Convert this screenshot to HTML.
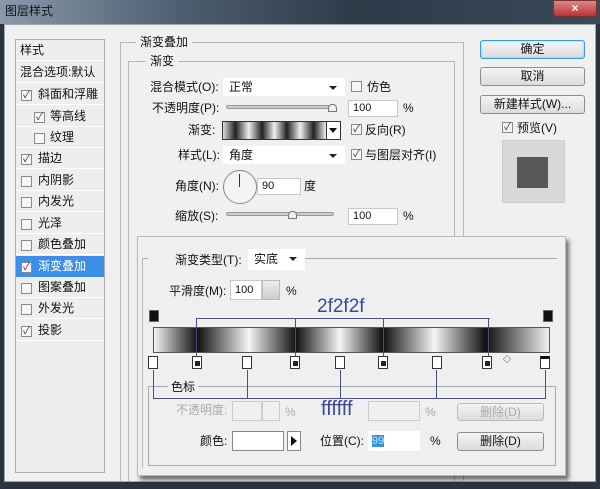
<!DOCTYPE html>
<html><head><meta charset="utf-8"><style>
*{margin:0;padding:0;box-sizing:border-box}
body{width:600px;height:489px;overflow:hidden;background:#2a3440;font-family:"Liberation Sans","Noto Sans CJK SC",sans-serif;font-size:12px;color:#111;position:relative}
.a{position:absolute;white-space:nowrap}
.t{position:absolute;white-space:nowrap;line-height:14px}
.box{position:absolute;border:1px solid #b8b8b8}
.inp{position:absolute;background:#fff;border:1px solid #c8c8c8;line-height:15px;padding-left:4px;font-size:11px}
.cb{position:absolute;width:11px;height:11px;border:1px solid #8a8a8a;background:#f6f6f6;font-size:10px;line-height:9px;text-align:center;color:#334}
.btn{position:absolute;border:1px solid #8d8d8d;border-radius:3px;background:linear-gradient(#f4f4f4,#dcdcdc);text-align:center;line-height:16px}
.sel{position:absolute;background:#fff;padding-left:6px;line-height:18px}
.sel:after{content:"";position:absolute;right:8px;top:8px;border:4px solid transparent;border-top:4px solid #222}
.item{position:absolute;left:16px;width:88px;height:21px;border-bottom:1px solid #fff;line-height:20px;padding-left:4px}
.vl{position:absolute;width:1px;background:#4a4f8a}
.hl{position:absolute;height:1px;background:#4a4f8a}
.sw{position:absolute;width:10px;height:13px;border:1px solid #333;background:#fff}
.sw.k:after{content:"";position:absolute;left:2px;top:4px;width:5px;height:5px;background:#222}
</style></head><body>
<div class="a" style="left:0;top:0;width:600px;height:24px;background:linear-gradient(90deg,#8a9aab 0%,#4d5e70 30%,#2d3a48 60%,#3a4a5a 100%)"></div>
<div class="t" style="left:5px;top:4px;color:#111">图层样式</div>
<div class="a" style="left:553px;top:0;width:44px;height:17px;background:linear-gradient(#d88,#b33);border-radius:0 0 4px 4px;border:1px solid #733;color:#fff;text-align:center;line-height:15px;font-weight:bold">×</div>
<div class="a" style="left:4px;top:24px;width:592px;height:458px;background:#f0f0f0;border:1px solid #9aa"></div>

<!-- left list -->
<div class="a" style="left:15px;top:39px;width:90px;height:434px;border:1px solid #aaa;background:#eeeeee"></div>
<div class="item" style="top:40px">样式</div>
<div class="item" style="top:62px">混合选项:默认</div>
<div class="item" style="top:84px;padding-left:22px">斜面和浮雕</div><div class="cb" style="left:21px;top:90px">✓</div>
<div class="item" style="top:106px;padding-left:34px">等高线</div><div class="cb" style="left:34px;top:112px">✓</div>
<div class="item" style="top:127px;padding-left:34px">纹理</div><div class="cb" style="left:34px;top:133px"></div>
<div class="item" style="top:148px;padding-left:22px">描边</div><div class="cb" style="left:21px;top:154px">✓</div>
<div class="item" style="top:170px;padding-left:22px">内阴影</div><div class="cb" style="left:21px;top:176px"></div>
<div class="item" style="top:191px;padding-left:22px">内发光</div><div class="cb" style="left:21px;top:197px"></div>
<div class="item" style="top:213px;padding-left:22px">光泽</div><div class="cb" style="left:21px;top:219px"></div>
<div class="item" style="top:234px;padding-left:22px">颜色叠加</div><div class="cb" style="left:21px;top:240px"></div>
<div class="item" style="top:256px;padding-left:22px;background:#3d8ee6;color:#fff;border-color:#3d8ee6">渐变叠加</div><div class="cb" style="left:21px;top:262px;color:#c00">✓</div>
<div class="item" style="top:277px;padding-left:22px">图案叠加</div><div class="cb" style="left:21px;top:283px"></div>
<div class="item" style="top:298px;padding-left:22px">外发光</div><div class="cb" style="left:21px;top:304px"></div>
<div class="item" style="top:320px;padding-left:22px">投影</div><div class="cb" style="left:21px;top:326px">✓</div>

<!-- main group -->
<div class="box" style="left:120px;top:42px;width:344px;height:440px;border-bottom:none"></div>
<div class="t" style="left:136px;top:35px;background:#f0f0f0;padding:0 4px">渐变叠加</div>
<div class="box" style="left:128px;top:61px;width:327px;height:420px;border-bottom:none"></div>
<div class="t" style="left:146px;top:54px;background:#f0f0f0;padding:0 4px">渐变</div>

<div class="t" style="left:150px;top:80px">混合模式(O):</div>
<div class="sel" style="left:223px;top:78px;width:122px">正常</div>
<div class="cb" style="left:351px;top:81px"></div><div class="t" style="left:367px;top:80px">仿色</div>
<div class="t" style="left:152px;top:101px">不透明度(P):</div>
<div class="a" style="left:226px;top:105px;width:106px;height:4px;border:1px solid #999;background:#ccc;border-radius:2px"></div>
<div class="a" style="left:328px;top:104px;width:9px;height:8px;border:1px solid #777;background:#eee;border-radius:4px 4px 0 0"></div>
<div class="inp" style="left:348px;top:100px;width:50px;height:17px">100</div><div class="t" style="left:403px;top:101px">%</div>
<div class="t" style="left:188px;top:123px">渐变:</div>
<div class="a" style="left:222px;top:121px;width:105px;height:19px;border:1px solid #333;background:linear-gradient(90deg,#ddd,#222 12%,#eee 25%,#222 38%,#eee 50%,#222 62%,#eee 75%,#222 88%,#eee)"></div>
<div class="a" style="left:326px;top:121px;width:15px;height:19px;border:1px solid #333;background:#fff"></div>
<div class="a" style="left:329px;top:128px;border:4px solid transparent;border-top:5px solid #111"></div>
<div class="cb" style="left:351px;top:124px">✓</div><div class="t" style="left:365px;top:123px">反向(R)</div>
<div class="t" style="left:178px;top:148px">样式(L):</div>
<div class="sel" style="left:223px;top:146px;width:122px">角度</div>
<div class="cb" style="left:351px;top:149px">✓</div><div class="t" style="left:365px;top:148px">与图层对齐(I)</div>
<div class="t" style="left:175px;top:179px">角度(N):</div>
<div class="a" style="left:223px;top:170px;width:34px;height:34px;border:1px solid #888;border-radius:50%;background:#f4f4f4"></div>
<div class="a" style="left:239px;top:174px;width:1px;height:13px;background:#333"></div>
<div class="inp" style="left:257px;top:178px;width:44px;height:17px">90</div><div class="t" style="left:304px;top:179px">度</div>
<div class="t" style="left:175px;top:209px">缩放(S):</div>
<div class="a" style="left:226px;top:212px;width:108px;height:4px;border:1px solid #999;background:#ccc;border-radius:2px"></div>
<div class="a" style="left:288px;top:211px;width:9px;height:8px;border:1px solid #777;background:#eee;border-radius:4px 4px 0 0"></div>
<div class="inp" style="left:348px;top:208px;width:50px;height:17px">100</div><div class="t" style="left:403px;top:209px">%</div>

<!-- right buttons -->
<div class="btn" style="left:480px;top:40px;width:105px;height:19px;border-color:#3aa0c8;box-shadow:0 0 2px #6cf inset">确定</div>
<div class="btn" style="left:480px;top:67px;width:105px;height:19px">取消</div>
<div class="btn" style="left:480px;top:95px;width:105px;height:19px">新建样式(W)...</div>
<div class="cb" style="left:502px;top:122px">✓</div><div class="t" style="left:517px;top:121px">预览(V)</div>
<div class="a" style="left:502px;top:140px;width:63px;height:63px;background:#d8d8d8;border:1px solid #ccc"></div>
<div class="a" style="left:517px;top:157px;width:31px;height:31px;background:#585858"></div>

<!-- popup -->
<div class="a" style="left:137px;top:236px;width:429px;height:240px;background:#efefef;border:1px solid #bbb;box-shadow:3px 4px 4px rgba(0,0,0,.55)"></div>
<div class="hl" style="left:142px;top:258px;width:6px;background:#aaa"></div>
<div class="hl" style="left:305px;top:258px;width:252px;background:#aaa"></div>
<div class="vl" style="left:142px;top:258px;height:210px;background:#bbb"></div>
<div class="t" style="left:175px;top:253px">渐变类型(T):</div>
<div class="sel" style="left:248px;top:249px;width:57px;height:21px;line-height:21px">实底</div>
<div class="t" style="left:169px;top:284px">平滑度(M):</div>
<div class="inp" style="left:230px;top:280px;width:32px;height:20px;line-height:18px">100</div>
<div class="a" style="left:262px;top:280px;width:18px;height:20px;background:linear-gradient(#eee,#ccc);border:1px solid #bbb"></div>
<div class="t" style="left:286px;top:284px">%</div>
<div class="a" style="left:317px;top:297px;font-size:19px;color:#3c4a94;line-height:20px">2f2f2f</div>

<div class="a" style="left:149px;top:310px;width:10px;height:12px;background:#111;border:1px solid #666"></div>
<div class="a" style="left:543px;top:310px;width:10px;height:12px;background:#111;border:1px solid #666"></div>
<div class="a" style="left:153px;top:327px;width:397px;height:26px;border:1px solid #555;background:linear-gradient(90deg,#f4f4f4 0%,#111 11%,#f4f4f4 24%,#111 36%,#f4f4f4 47%,#111 58%,#f4f4f4 71%,#111 84%,#f0f0f0 100%)"></div>
<div class="hl" style="left:196px;top:318px;width:294px"></div>
<div class="vl" style="left:196px;top:318px;height:38px"></div>
<div class="vl" style="left:295px;top:318px;height:38px"></div>
<div class="vl" style="left:383px;top:318px;height:38px"></div>
<div class="vl" style="left:488px;top:318px;height:38px"></div>

<div class="sw" style="left:148px;top:356px"></div>
<div class="sw k" style="left:192px;top:356px"></div>
<div class="sw" style="left:242px;top:356px"></div>
<div class="sw k" style="left:290px;top:356px"></div>
<div class="sw" style="left:335px;top:356px"></div>
<div class="sw k" style="left:378px;top:356px"></div>
<div class="sw" style="left:432px;top:356px"></div>
<div class="sw k" style="left:482px;top:356px"></div>
<div class="a" style="left:503px;top:354px;font-size:8px">◇</div>
<div class="sw" style="left:540px;top:356px;border-top:3px solid #111"></div>

<div class="box" style="left:148px;top:386px;width:408px;height:80px;border-color:#aaa"></div>
<div class="t" style="left:168px;top:380px;background:#efefef;padding:0 3px">色标</div>
<div class="hl" style="left:153px;top:398px;width:393px"></div>
<div class="vl" style="left:153px;top:370px;height:29px"></div>
<div class="vl" style="left:247px;top:370px;height:29px"></div>
<div class="vl" style="left:340px;top:370px;height:29px"></div>
<div class="vl" style="left:436px;top:370px;height:29px"></div>
<div class="vl" style="left:545px;top:370px;height:29px"></div>

<div class="t" style="left:176px;top:403px;color:#aaa">不透明度:</div>
<div class="a" style="left:232px;top:401px;width:30px;height:20px;border:1px solid #ccc;background:#f0f0f0"></div>
<div class="a" style="left:262px;top:401px;width:18px;height:20px;border:1px solid #ccc;background:#f0f0f0"></div>
<div class="t" style="left:285px;top:405px;color:#aaa">%</div>
<div class="a" style="left:321px;top:398px;font-size:20px;color:#3c4a94;line-height:22px">ffffff</div>
<div class="a" style="left:368px;top:401px;width:52px;height:20px;border:1px solid #ccc;background:#f0f0f0"></div>
<div class="t" style="left:425px;top:405px;color:#aaa">%</div>
<div class="btn" style="left:457px;top:403px;width:87px;height:18px;color:#aaa;border-color:#bbb">删除(D)</div>

<div class="t" style="left:200px;top:434px">颜色:</div>
<div class="a" style="left:232px;top:431px;width:52px;height:20px;border:1px solid #888;background:#fff"></div>
<div class="a" style="left:287px;top:431px;width:14px;height:20px;border:1px solid #888;background:#fff"></div>
<div class="a" style="left:291px;top:436px;border:5px solid transparent;border-left:6px solid #111;border-right:0"></div>
<div class="t" style="left:320px;top:434px">位置(C):</div>
<div class="inp" style="left:368px;top:431px;width:52px;height:20px;border:none;line-height:20px"><span style="background:#3a8ee0;color:#aee">99</span></div>
<div class="t" style="left:430px;top:434px">%</div>
<div class="btn" style="left:457px;top:432px;width:87px;height:19px">删除(D)</div>
</body></html>
